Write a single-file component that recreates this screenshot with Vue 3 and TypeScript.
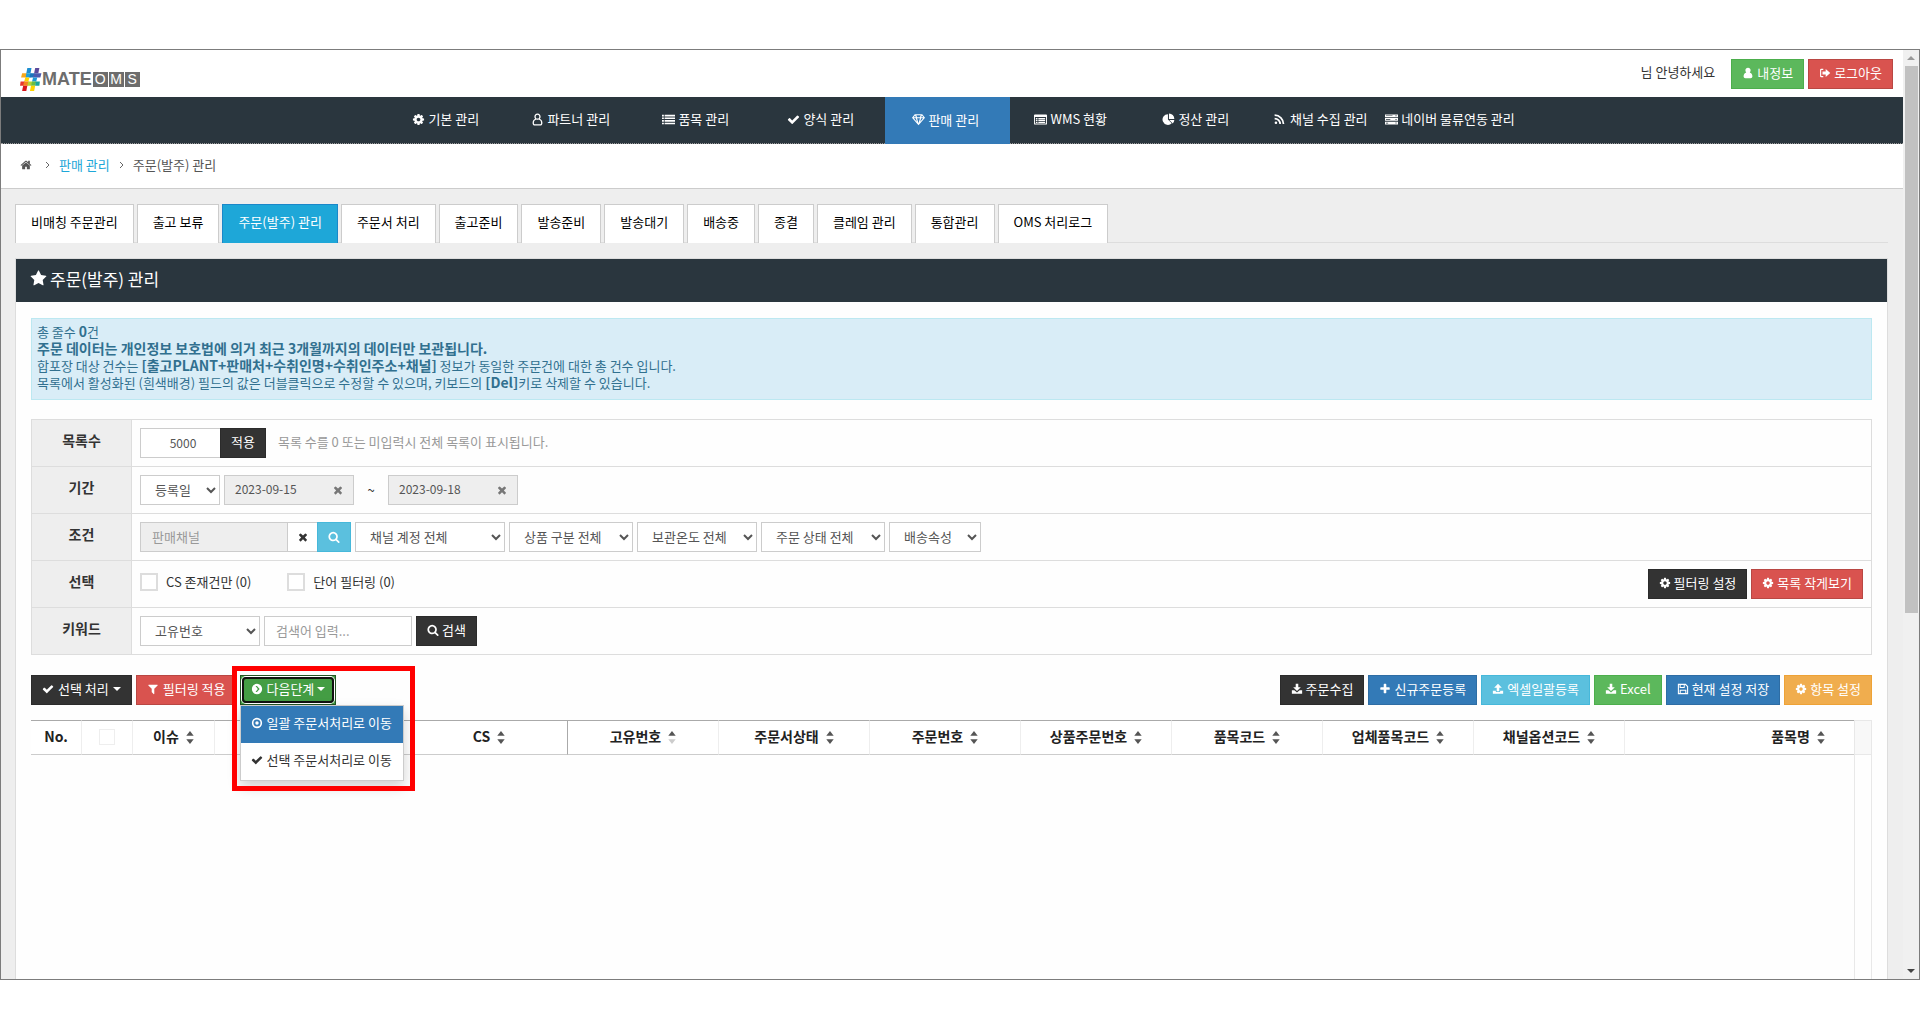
<script setup lang="ts">
import { ref, h, type FunctionalComponent } from 'vue'

const paths: Record<string, string> = {
  cog: 'M1152 896q0-106-75-181t-181-75-181 75-75 181 75 181 181 75 181-75 75-181zm512-109v222q0 12-8 23t-20 13l-185 28q-19 54-39 91 35 50 107 138 10 12 10 25t-9 23q-27 37-99 108t-94 71q-12 0-26-9l-138-108q-44 23-91 38-16 136-29 186-7 28-36 28h-222q-14 0-24.5-8.5t-11.5-21.5l-28-184q-49-16-90-37l-141 107q-10 9-25 9-14 0-25-11-126-114-165-168-7-10-7-23 0-12 8-23 15-21 51-66.5t54-70.5q-27-50-41-99l-183-27q-13-2-21-12.5t-8-23.5v-222q0-12 8-23t19-13l186-28q14-46 39-92-40-57-107-138-10-12-10-24 0-10 9-23 26-36 98.5-107.5t94.5-71.5q13 0 26 10l138 107q44-23 91-38 16-136 29-186 7-28 36-28h222q14 0 24.5 8.5t11.5 21.5l28 184q49 16 90 37l142-107q9-9 24-9 13 0 25 10 129 119 165 170 7 8 7 22 0 12-8 23-15 21-51 66.5t-54 70.5q26 50 41 98l183 28q13 2 21 12.5t8 23.5z',
  check: 'M1671 566q0 40-28 68l-724 724-136 136q-28 28-68 28t-68-28l-136-136-362-362q-28-28-28-68t28-68l136-136q28-28 68-28t68 28l294 295 656-657q28-28 68-28t68 28l136 136q28 28 28 68z',
  search: 'M1216 832q0-185-131.5-316.5t-316.5-131.5-316.5 131.5-131.5 316.5 131.5 316.5 316.5 131.5 316.5-131.5 131.5-316.5zm512 832q0 52-38 90t-90 38q-54 0-90-38l-343-342q-179 124-399 124-143 0-273.5-55.5t-225-150-150-225-55.5-273.5 55.5-273.5 150-225 225-150 273.5-55.5 273.5 55.5 225 150 150 225 55.5 273.5q0 220-124 399l343 343q37 37 37 90z',
  filter: 'M1595 295q17 41-14 70l-493 493v742q0 42-39 59-13 5-25 5-27 0-45-19l-256-256q-19-19-19-45v-486l-493-493q-31-29-14-70 17-39 59-39h1280q42 0 59 39z',
  home: 'M1472 992v480q0 26-19 45t-45 19h-384v-384h-256v384h-384q-26 0-45-19t-19-45v-480q0-1 .5-3t.5-3l575-474 575 474q1 2 1 6zm223-69l-62 74q-8 9-21 11h-3q-13 0-21-7l-692-577-692 577q-12 8-24 7-13-2-21-11l-62-74q-8-10-7-23.5t11-21.5l719-599q32-26 76-26t76 26l244 204v-195q0-14 9-23t23-9h192q14 0 23 9t9 23v408l219 182q10 8 11 21.5t-7 23.5z',
  star: 'M1728 647q0 22-26 48l-363 354 86 500q1 7 1 20 0 21-10.5 35.5t-30.5 14.5q-19 0-40-12l-449-236-449 236q-22 12-40 12-21 0-31.5-14.5t-10.5-35.5q0-6 2-20l86-500-364-354q-25-27-25-48 0-37 56-46l502-73 225-455q19-41 49-41t49 41l225 455 502 73q56 9 56 46z',
  times: 'M1490 1322q0 40-28 68l-136 136q-28 28-68 28t-68-28l-294-294-294 294q-28 28-68 28t-68-28l-136-136q-28-28-28-68t28-68l294-294-294-294q-28-28-28-68t28-68l136-136q28-28 68-28t68 28l294 294 294-294q28-28 68-28t68 28l136 136q28 28 28 68t-28 68l-294 294 294 294q28 28 28 68z',
  plus: 'M1600 736v192q0 40-28 68t-68 28h-416v416q0 40-28 68t-68 28h-192q-40 0-68-28t-28-68v-416h-416q-40 0-68-28t-28-68v-192q0-40 28-68t68-28h416v-416q0-40 28-68t68-28h192q40 0 68 28t28 68v416h416q40 0 68 28t28 68z',
  person: 'M896 100c-230 0-390 170-390 400 0 130 50 250 130 330-220 70-400 260-400 560 0 180 110 300 280 300h760c170 0 280-120 280-300 0-300-180-490-400-560 80-80 130-200 130-330 0-230-160-400-390-400z',
  personLine: 'M896 60c-260 0-430 190-430 440 0 120 40 220 110 300-210 90-360 290-360 570 0 210 130 360 330 360h700c200 0 330-150 330-360 0-280-150-480-360-570 70-80 110-180 110-300 0-250-170-440-430-440zm0 170c150 0 250 110 250 270s-100 270-250 270-250-110-250-270 100-270 250-270zm-150 680c100 40 200 40 300 0 190 40 350 210 350 460 0 120-60 190-150 190h-700c-90 0-150-70-150-190 0-250 160-420 350-460z',
  list: 'M0 256h256v220h-256zM360 256h1432v220h-1432zM0 616h256v220h-256zM360 616h1432v220h-1432zM0 976h256v220h-256zM360 976h1432v220h-1432zM0 1336h256v220h-256zM360 1336h1432v220h-1432z',
  gem: 'M380 160h1032l380 480-896 1052-896-1052zM420 330l-190 240h310zM600 300l100 270h392l100-270zM1372 330l-120 240h310zM260 720l400 480-130-480zM700 720l196 680 196-680zM1532 720l-270 0-130 480z',
  card: 'M120 200h1552q120 0 120 120v1152q0 120-120 120h-1552q-120 0-120-120v-1152q0-120 120-120zM130 560v900h1532v-900zM260 680h220v170h-220zM600 680h932v170h-932zM260 940h220v170h-220zM600 940h932v170h-932zM260 1200h220v170h-220zM600 1200h932v170h-932z',
  pie: 'M820 160v740l520 520a740 740 0 1 1-520-1260zM960 60a760 760 0 0 1 740 760h-740zM1010 970h690a740 740 0 0 1-210 470z',
  rss: 'M448 1344a180 180 0 1 1-360 0 180 180 0 0 1 360 0zM88 640a880 880 0 0 1 880 884h-240a640 640 0 0 0-640-640zM88 180a1340 1340 0 0 1 1340 1344h-240a1100 1100 0 0 0-1100-1100z',
  server: 'M0 200h1792v380h-1792zM0 700h1792v380h-1792zM0 1200h1792v380h-1792zM130 330v100h900v-100zM1450 310v140h140v-140zM130 840v100h600v-100zM1450 820v140h140v-140zM130 1340v100h300v-100zM1450 1320v140h140v-140z',
  signout: 'M640 256h-300q-180 0-180 180v920q0 180 180 180h300v-190h-270q-40 0-40-40v-820q0-40 40-40h270zM1000 300l680 596-680 596v-370h-480v-452h480z',
  download: 'M704 128h384v512h380l-572 560-572-560h380zM128 1088h380l388 330 388-330h380v512h-1536z',
  upload: 'M704 1216h384v-512h380l-572-576-572 576h380zM128 1152h450v190h636v-190h450v448h-1536z',
  save: 'M128 128h1180l356 356v1180h-1536zM290 290v1210h110v-500h992v500h110v-940l-270-270h-80v470h-762v-470zM550 290v310h330v-310zM1010 290v310h-130v-310zM560 1160v340h672v-340z',
  arrowCircle: 'M896 128a768 768 0 1 0 0 1536 768 768 0 0 0 0-1536zM680 430l210 0 400 466-400 466h-210l340-466-340-466z',
  dotCircle: 'M896 128a768 768 0 1 0 0 1536 768 768 0 0 0 0-1536zM896 370a526 526 0 1 1 0 1052 526 526 0 0 1 0-1052zM896 640a256 256 0 1 0 0 512 256 256 0 0 0 0-512z',
}

const Icon: FunctionalComponent<{ name: string }> = (props) =>
  h('svg', { viewBox: '0 0 1792 1792', 'aria-hidden': 'true', fill: 'currentColor', 'fill-rule': 'evenodd' }, [
    h('path', { d: paths[props.name] }),
  ])
Icon.props = ['name']

const menu = [
  { icon: 'cog', label: '기본 관리' },
  { icon: 'personLine', label: '파트너 관리' },
  { icon: 'list', label: '품목 관리' },
  { icon: 'check', label: '양식 관리' },
  { icon: 'gem', label: '판매 관리', active: true },
  { icon: 'card', label: 'WMS 현황' },
  { icon: 'pie', label: '정산 관리' },
  { icon: 'rss', label: '채널 수집 관리' },
  { icon: 'server', label: '네이버 물류연동 관리' },
]

const tabs = ['비매칭 주문관리', '출고 보류', '주문(발주) 관리', '주문서 처리', '출고준비', '발송준비', '발송대기', '배송중', '종결', '클레임 관리', '통합관리', 'OMS 처리로그']
const activeTab = ref(2)

const conditions = [
  { label: '채널 계정 전체', size: 'w150' },
  { label: '상품 구분 전체', size: 'w124' },
  { label: '보관온도 전체', size: 'w120' },
  { label: '주문 상태 전체', size: 'w124' },
  { label: '배송속성', size: 'w92' },
]

const actions = [
  { icon: 'download', label: '주문수집', tone: 'dark' },
  { icon: 'plus', label: '신규주문등록', tone: 'blue' },
  { icon: 'upload', label: '엑셀일괄등록', tone: 'sky' },
  { icon: 'download', label: 'Excel', tone: 'green' },
  { icon: 'save', label: '현재 설정 저장', tone: 'blue' },
  { icon: 'cog', label: '항목 설정', tone: 'orange' },
]

const columns = [
  { label: 'CS', size: 'c-cs', last: true },
  { label: '고유번호', size: 'c-std', asc: true },
  { label: '주문서상태', size: 'c-std' },
  { label: '주문번호', size: 'c-std' },
  { label: '상품주문번호', size: 'c-std' },
  { label: '품목코드', size: 'c-std' },
  { label: '업체품목코드', size: 'c-std' },
  { label: '채널옵션코드', size: 'c-std' },
  { label: '품목명', size: 'c-name' },
]

const listCount = ref('5000')
const dateFrom = ref('2023-09-15')
const dateTo = ref('2023-09-18')
const keyword = ref('')
</script>

<template>
  <div class="page">
    <div class="frame">
      <div class="content">
        <header class="top">
          <a href="#" class="logo" aria-label="MATE OMS">
            <svg class="hash" viewBox="0 0 42 44" aria-hidden="true">
              <path d="M14 0h8l-2 10h-8z" fill="#1d8fd0" />
              <path d="M29 0h8l-2 10h-8z" fill="#5b4a9c" />
              <path d="M4 10h10l-1 8H2z" fill="#f7a81b" />
              <path d="M12 10h10l-2 8h-9z" fill="#1fa0dc" />
              <path d="M20 10h8l-2 8h-8z" fill="#1b75bb" />
              <path d="M27 10h14l-2 8H25z" fill="#4a5bb0" />
              <path d="M10 18h8l-2 8H8z" fill="#ffd400" />
              <path d="M25 18h8l-2 8h-8z" fill="#1d9bd8" />
              <path d="M1 26h8l-2 8H0z" fill="#e8382f" />
              <path d="M8 26h9l-2 8H6z" fill="#f58220" />
              <path d="M16 26h8l-2 8h-8z" fill="#b5d334" />
              <path d="M23 26h8l-2 8h-8z" fill="#6abd45" />
              <path d="M30 26h8l-1 8h-8z" fill="#1ba39c" />
              <path d="M6 34h8l-2 10H4z" fill="#d8141c" />
              <path d="M21 34h8l-2 10h-8z" fill="#ffd400" />
            </svg>
            <b>MATE</b>
            <span class="oms"><i>O</i><i>M</i><i>S</i></span>
          </a>
          <div class="user">
            <span>님 안녕하세요</span>
            <button type="button" class="btn green"><Icon name="person" />내정보</button>
            <button type="button" class="btn red"><Icon name="signout" />로그아웃</button>
          </div>
        </header>

        <nav class="gnb">
          <a v-for="m in menu" :key="m.label" href="#" :class="{ active: m.active }"><Icon :name="m.icon" />{{ m.label }}</a>
        </nav>

        <div class="crumbs">
          <a href="#" class="home" aria-label="홈"><Icon name="home" /></a>
          <svg class="sep" viewBox="0 0 5 8" aria-hidden="true"><path d="M1 1l3 3-3 3" /></svg>
          <a href="#" class="link">판매 관리</a>
          <svg class="sep" viewBox="0 0 5 8" aria-hidden="true"><path d="M1 1l3 3-3 3" /></svg>
          <span>주문(발주) 관리</span>
        </div>

        <main>
          <div class="tabs">
            <button v-for="(t, i) in tabs" :key="t" type="button" :class="{ active: i === activeTab }" @click="activeTab = i">{{ t }}</button>
          </div>

          <section class="panel">
            <h1><Icon name="star" />주문(발주) 관리</h1>
            <div class="body">
              <div class="notice">
                <p>총 줄수 <b>0</b>건</p>
                <p><b>주문 데이터는 개인정보 보호법에 의거 최근 3개월까지의 데이터만 보관됩니다.</b></p>
                <p>합포장 대상 건수는 <b>[출고PLANT+판매처+수취인명+수취인주소+채널]</b> 정보가 동일한 주문건에 대한 총 건수 입니다.</p>
                <p>목록에서 활성화된 (흰색배경) 필드의 값은 더블클릭으로 수정할 수 있으며, 키보드의 <b>[Del]</b>키로 삭제할 수 있습니다.</p>
              </div>

              <form class="filters" @submit.prevent>
                <div class="row">
                  <label class="head" for="count">목록수</label>
                  <div class="cell">
                    <div class="joined">
                      <input id="count" v-model="listCount" class="field count" type="text" />
                      <button type="button" class="btn dark">적용</button>
                    </div>
                    <span class="hint">목록 수를 0 또는 미입력시 전체 목록이 표시됩니다.</span>
                  </div>
                </div>
                <div class="row">
                  <label class="head" for="date-kind">기간</label>
                  <div class="cell">
                    <select id="date-kind" class="field w80"><option>등록일</option></select>
                    <span class="date"><input v-model="dateFrom" type="text" readonly aria-label="시작일" /><button type="button" aria-label="시작일 지우기"><Icon name="times" /></button></span>
                    <span class="tilde">~</span>
                    <span class="date"><input v-model="dateTo" type="text" readonly aria-label="종료일" /><button type="button" aria-label="종료일 지우기"><Icon name="times" /></button></span>
                  </div>
                </div>
                <div class="row">
                  <label class="head" for="channel">조건</label>
                  <div class="cell">
                    <div class="joined">
                      <input id="channel" class="field channel" type="text" placeholder="판매채널" readonly />
                      <button type="button" class="clear" aria-label="지우기"><Icon name="times" /></button>
                      <button type="button" class="btn sky find" aria-label="찾기"><Icon name="search" /></button>
                    </div>
                    <select v-for="c in conditions" :key="c.label" class="field" :class="c.size" :aria-label="c.label"><option>{{ c.label }}</option></select>
                  </div>
                </div>
                <div class="row">
                  <span class="head">선택</span>
                  <div class="cell">
                    <label class="tick"><input type="checkbox" />CS 존재건만 (0)</label>
                    <label class="tick"><input type="checkbox" />단어 필터링 (0)</label>
                    <span class="push">
                      <button type="button" class="btn dark"><Icon name="cog" />필터링 설정</button>
                      <button type="button" class="btn red"><Icon name="cog" />목록 작게보기</button>
                    </span>
                  </div>
                </div>
                <div class="row">
                  <label class="head" for="keyword-kind">키워드</label>
                  <div class="cell">
                    <select id="keyword-kind" class="field w120"><option>고유번호</option></select>
                    <input v-model="keyword" class="field w148" type="text" placeholder="검색어 입력..." aria-label="검색어" />
                    <button type="submit" class="btn dark"><Icon name="search" />검색</button>
                  </div>
                </div>
              </form>

              <div class="toolbar">
                <button type="button" class="btn dark"><Icon name="check" />선택 처리<i class="caret"></i></button>
                <button type="button" class="btn red"><Icon name="filter" />필터링 적용</button>
                <div class="dropdown">
                  <button type="button" class="btn next" aria-expanded="true"><Icon name="arrowCircle" />다음단계<i class="caret"></i></button>
                  <div class="menu">
                    <a href="#" class="active"><Icon name="dotCircle" />일괄 주문서처리로 이동</a>
                    <a href="#"><Icon name="check" />선택 주문서처리로 이동</a>
                  </div>
                  <div class="marker"></div>
                </div>
                <span class="push">
                  <button v-for="a in actions" :key="a.label" type="button" class="btn" :class="a.tone"><Icon :name="a.icon" />{{ a.label }}</button>
                </span>
              </div>

              <div class="grid">
                <div class="scroller">
                  <table>
                    <thead>
                      <tr>
                        <th class="c-no">No.</th>
                        <th class="c-no"><input type="checkbox" class="all" aria-label="전체 선택" /></th>
                        <th class="c-issue">이슈<svg class="sort" viewBox="0 0 8 14" aria-hidden="true"><path d="M4 0l4 5H0z" /><path d="M4 14l4-5H0z" /></svg></th>
                        <th class="c-wide"></th>
                        <th v-for="c in columns" :key="c.label" :class="[c.size, { frozen: c.last }]">{{ c.label }}<svg class="sort" viewBox="0 0 8 14" aria-hidden="true"><path d="M4 0l4 5H0z" /><path d="M4 14l4-5H0z" :class="{ pale: c.asc }" /></svg></th>
                      </tr>
                    </thead>
                  </table>
                </div>
                <div class="gutter"><div></div></div>
              </div>
            </div>
          </section>
        </main>
      </div>

      <div class="scrollbar" aria-hidden="true">
        <i class="up"></i>
        <div class="track"><div class="thumb"></div></div>
        <i class="down"></i>
      </div>
    </div>
  </div>
</template>

<style>
body {
  margin: 0;
  background: #fff;
}
</style>

<style scoped>
* {
  box-sizing: border-box;
}
.page {
  display: flex;
  flex-direction: column;
  min-height: 100vh;
  padding: 49px 0 50px;
  font-family: 'Noto Sans CJK KR', sans-serif;
  font-size: 13px;
  line-height: 18px;
  color: #333;
}
button,
input,
select {
  font: inherit;
  color: inherit;
  border-radius: 0;
  margin: 0;
}
button {
  cursor: pointer;
}
a {
  color: inherit;
  text-decoration: none;
}
svg {
  width: 12px;
  height: 12px;
  flex: none;
}
.frame {
  flex: 1;
  display: flex;
  border: 1px solid #7c7c7c;
}
.content {
  flex: 1;
  min-width: 0;
  display: flex;
  flex-direction: column;
}
.top {
  height: 47px;
  display: flex;
  justify-content: space-between;
  align-items: flex-start;
  padding: 9px 10px 0 19px;
}
.logo {
  display: flex;
  align-items: center;
  height: 24px;
  margin-top: 8px;
  color: #6d6d6d;
  font-family: 'Liberation Sans', sans-serif;
}
.hash {
  width: 22px;
  height: 23px;
}
.logo b {
  font-size: 18px;
  margin-right: 1px;
}
.oms {
  display: flex;
  gap: 1px;
}
.oms i {
  width: 15px;
  height: 15px;
  background: #6d6d6d;
  color: #fff;
  font-size: 14px;
  line-height: 15px;
  font-style: normal;
  text-align: center;
}
.user {
  display: flex;
  gap: 4px;
}
.user span {
  margin-right: 12px;
  line-height: 26px;
}
.btn {
  display: flex;
  align-items: center;
  gap: 3px;
  height: 30px;
  padding: 0 10px 2px;
  border: 1px solid;
  color: #fff;
  white-space: nowrap;
}
.dark {
  background: #333;
  border-color: #2b2b2b;
}
.red {
  background: #d9534f;
  border-color: #b94743;
}
.green {
  background: #5cb85c;
  border-color: #4cae4c;
}
.blue {
  background: #337ab7;
  border-color: #2e6da4;
}
.sky {
  background: #5bc0de;
  border-color: #46b8da;
}
.orange {
  background: #f0ad4e;
  border-color: #eea236;
}
.gnb {
  height: 47px;
  display: flex;
  justify-content: center;
  background: #2a363e;
  border-bottom: 1px dotted #999;
  color: #fff;
}
.gnb a {
  min-width: 125px;
  display: flex;
  align-items: center;
  justify-content: center;
  gap: 3px;
  padding: 0 4px 2px 0;
  white-space: nowrap;
}
.gnb svg {
  width: 13px;
  height: 13px;
}
.gnb a.active {
  background: #337ab7;
  margin-bottom: -1px;
}
.crumbs {
  height: 45px;
  display: flex;
  align-items: center;
  padding: 0 19px 2px;
  border-bottom: 1px solid #ccc;
  color: #555;
}
.home {
  display: flex;
  margin-right: 13px;
}
.crumbs .sep {
  width: 5px;
  height: 8px;
  fill: none;
  stroke: #666;
}
.link {
  color: #1ea7d8;
  margin: 0 9px;
}
.crumbs span {
  margin-left: 9px;
}
main {
  flex: 1;
  display: flex;
  flex-direction: column;
  padding: 15px 15px 0 14px;
  background: #eee;
}
.tabs {
  display: flex;
  gap: 3px;
  border-bottom: 1px solid #ddd;
}
.tabs button {
  height: 39px;
  margin-bottom: -1px;
  padding: 0 15px 4px;
  background: #fff;
  border: 1px solid #ccc;
  border-bottom: 0;
  color: #000;
  white-space: nowrap;
}
.tabs button.active {
  background: #1ea7d8;
  border-color: #1b87c9;
  color: #fff;
}
.panel {
  flex: 1;
  display: flex;
  flex-direction: column;
  margin-top: 15px;
  background: #fefefe;
  border: 1px solid #ddd;
  border-bottom: 0;
}
h1 {
  display: flex;
  align-items: center;
  gap: 3px;
  height: 43px;
  margin: 0;
  padding: 0 14px 4px;
  background: #2a363e;
  color: #fff;
  font-size: 17px;
  font-weight: 400;
  line-height: 24px;
}
h1 svg {
  width: 17px;
  height: 17px;
}
.body {
  flex: 1;
  display: flex;
  flex-direction: column;
  padding: 16px 15px 0;
}
.notice {
  padding: 4px 5px 8px;
  background: #d9edf7;
  border: 1px solid #bce8f1;
  color: #31708f;
}
.notice p {
  height: 17px;
  margin: 0;
  line-height: 17px;
}
.notice b {
  font-size: 14px;
}
.filters {
  margin-top: 19px;
  border: 1px solid #ddd;
  border-bottom: 0;
}
.row {
  display: flex;
  height: 47px;
  border-bottom: 1px solid #ddd;
}
.head {
  width: 100px;
  padding-bottom: 6px;
  display: flex;
  align-items: center;
  justify-content: center;
  background: #eee;
  border-right: 1px solid #ddd;
  font-size: 14px;
  font-weight: 700;
}
.cell {
  flex: 1;
  display: flex;
  align-items: center;
  gap: 4px;
  padding: 0 8px;
}
.joined {
  display: flex;
}
.field {
  height: 30px;
  padding: 0 11px 2px;
  background: #fff;
  border: 1px solid #ccc;
  color: #555;
}
.field::placeholder {
  color: #999;
}
.count {
  width: 80px;
  padding-left: 16px;
  text-align: center;
  font-size: 12px;
  border-right: 0;
}
.channel {
  width: 148px;
  background: #eee;
}
.clear {
  width: 29px;
  display: flex;
  align-items: center;
  justify-content: center;
  padding: 0;
  background: #fff;
  border: 1px solid #ccc;
  border-left: 0;
  border-right: 0;
}
.find {
  width: 34px;
  padding: 0;
  justify-content: center;
}
.w80 {
  width: 80px;
}
.w92 {
  width: 92px;
}
.w120 {
  width: 120px;
}
.w124 {
  width: 124px;
}
.w148 {
  width: 148px;
}
.w150 {
  width: 150px;
}
select.field {
  padding: 0 0 2px 10px;
}
.hint {
  margin-left: 8px;
  padding-bottom: 2px;
  color: #999;
}
.date {
  width: 130px;
  height: 30px;
  display: flex;
  align-items: center;
  padding: 0 9px 0 10px;
  background: #eee;
  border: 1px solid #ccc;
  color: #555;
}
.date input {
  flex: 1;
  min-width: 0;
  padding: 0 0 2px;
  border: 0;
  background: none;
  font-size: 12px;
}
.date button {
  display: flex;
  padding: 0;
  border: 0;
  background: none;
  color: #777;
}
.tilde {
  width: 26px;
  text-align: center;
}
.tick {
  display: flex;
  align-items: center;
  gap: 8px;
  margin-right: 32px;
  padding-bottom: 4px;
}
.tick input {
  appearance: none;
  width: 18px;
  height: 18px;
  background: #fff;
  border: 2px solid #ddd;
}
.push {
  display: flex;
  gap: 4px;
  margin-left: auto;
}
.toolbar {
  display: flex;
  gap: 4px;
  margin-top: 20px;
}
.toolbar > .btn {
  gap: 4px;
}
.caret {
  border: 4px solid transparent;
  border-top-color: currentColor;
  border-bottom: 0;
}
.dropdown {
  position: relative;
  z-index: 2;
}
.next {
  position: relative;
  background: #449d44;
  border-color: #255625;
}
.next::after {
  content: '';
  position: absolute;
  inset: 1px;
  border: 2px solid #111;
  border-radius: 4px;
  box-shadow: 0 0 0 1px #fff;
}
.menu {
  position: absolute;
  top: 30px;
  left: 0;
  background: #fff;
  border: 1px solid #ccc;
  box-shadow: 0 6px 12px rgba(0, 0, 0, 0.18);
}
.menu a {
  height: 37px;
  display: flex;
  align-items: center;
  gap: 3px;
  padding: 0 11px 4px 10px;
  white-space: nowrap;
}
.menu a.active {
  background: #337ab7;
  color: #fff;
}
.marker {
  position: absolute;
  top: -9px;
  left: -8px;
  width: 183px;
  height: 125px;
  border: 5px solid #f00;
  pointer-events: none;
}
.grid {
  flex: 1;
  display: flex;
  margin-top: 15px;
}
.scroller {
  flex: 1;
  width: 0;
  overflow: hidden;
}
.gutter {
  width: 18px;
  border: 1px solid #e8e8e8;
  border-bottom: 0;
}
.gutter div {
  height: 34px;
  background: #f8f8f8;
  border-bottom: 1px solid #e8e8e8;
}
table {
  width: 1941px;
  table-layout: fixed;
  border-collapse: separate;
  border-spacing: 0;
}
th {
  height: 35px;
  padding: 0 0 4px;
  background: #fff;
  border-top: 1px solid #aaa;
  border-bottom: 1px solid #ccc;
  border-right: 1px solid #eee;
  color: #222;
  font-size: 14px;
  font-weight: 700;
  text-align: center;
  white-space: nowrap;
}
th.frozen {
  border-right-color: #aaa;
}
.c-no {
  width: 51px;
}
.c-issue {
  width: 82px;
}
.c-wide {
  width: 196px;
}
.c-cs {
  width: 157px;
}
.c-std {
  width: 151px;
}
.c-name {
  width: 347px;
}
.sort {
  width: 8px;
  height: 13px;
  margin-left: 7px;
  vertical-align: -2px;
  fill: #555;
}
.sort .pale {
  fill: #ccc;
}
.all {
  appearance: none;
  width: 16px;
  height: 16px;
  border: 1px solid #eee;
  vertical-align: middle;
}
.scrollbar {
  width: 16px;
  display: flex;
  flex-direction: column;
  align-items: center;
  background: #f0f0f0;
}
.scrollbar i {
  margin: 6px 0;
  border: 4px solid transparent;
}
.scrollbar .up {
  border-top: 0;
  border-bottom-color: #999;
}
.scrollbar .down {
  border-bottom: 0;
  border-top-color: #444;
}
.track {
  flex: 1;
}
.thumb {
  width: 13px;
  height: 61%;
  background: #c1c1c1;
}
</style>
